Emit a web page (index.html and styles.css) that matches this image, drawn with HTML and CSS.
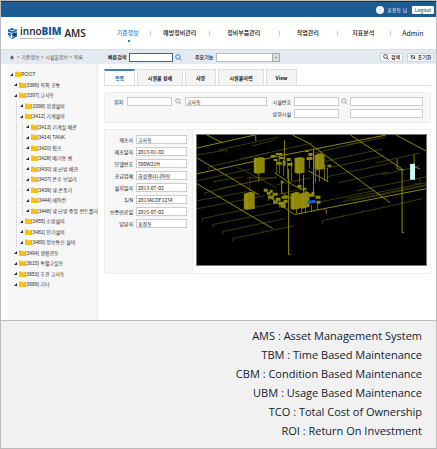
FILE: index.html
```html
<!DOCTYPE html>
<html lang="ko">
<head>
<meta charset="utf-8">
<title>innoBIM AMS</title>
<link rel="stylesheet" href="styles.css">
</head>
<body>
<svg class="defs" aria-hidden="true">
  <symbol id="search" viewBox="0 0 8 8"><circle cx="3.3" cy="3.3" r="2.5" fill="none" stroke="currentColor"/><path d="M5.2 5.2 7.5 7.5" stroke="currentColor"/></symbol>
  <symbol id="folder" viewBox="0 0 6 6"><path d="M0 .5h2.500l.7.8H6V6H0z" fill="#fdc010"/></symbol>
</svg>
<div class="app">
  <header>
    <div class="userbar">
      <svg class="avatar" viewBox="0 0 8 8"><circle cx="4" cy="4" r="4" fill="#f5f7f9"/><circle cx="4" cy="3.3" r="1.3" fill="#dde2e8"/><path d="M1.8 6.5q2.2-2.6 4.4 0" fill="#dde2e8"/></svg>
      <span>홍길동 님</span>
      <button class="logout">Logout</button>
    </div>
    <div class="navbar">
      <a class="logo" href="#">
        <svg viewBox="0 0 12 12"><path d="M1 2 5 0l6 2v7l-5 3-5-3z" fill="#16649f"/><path d="M0 4 5 6l6-2M5 6v5M1 8l4 2 5-3M3 2l3 1 3-1" fill="none" stroke="#fff"/><circle cx="8" cy="7" r="2" fill="#123e6e"/></svg>
        <span class="brand"><span>inno<b>BIM</b></span><small>BIM Building Information Modeling</small></span><span class="ams">AMS</span>
      </a>
      <nav>
        <a class="on" href="#">기준정보</a><a href="#">예방정비관리</a><a href="#">정비부품관리</a><a href="#">작업관리</a><a href="#">지표분석</a><a class="admin" href="#">Admin</a>
      </nav>
    </div>
    <div class="toolbar">
      <div class="crumbs"><svg viewBox="0 0 6 6"><path d="M3 0 6 3H5v3H3.600V4H2.400v2H1V3H0z" fill="#555"/></svg><span>&gt; 기준정보 &gt; 시설물정보 &gt; 목록</span></div>
      <label for="quick">빠른검색</label><input id="quick" class="quick"><svg class="lens blue"><use href="#search"/></svg>
      <label class="mainfn" for="fn">주요기능</label>
      <span class="selectbox"><select id="fn"><option></option></select><svg viewBox="0 0 8 8"><path d="m2 3 2 2 2-2" fill="none" stroke="#777"/></svg></span>
      <button class="act first"><svg><use href="#search"/></svg>검색</button>
      <button class="act"><svg viewBox="0 0 8 8"><path d="M3 7Q0 4 3 2M5 1q3 3 0 5M1 2h2v2M7 6H5V4" fill="none" stroke="#222"/></svg>초기화</button>
    </div>
  </header>
  <div class="body">
    <aside>
      <ul class="tree">
        <li><svg><use href="#folder"/></svg>ROOT</li>
        <li class="l1"><svg><use href="#folder"/></svg>[3389] 옥외 공통</li>
        <li class="l1"><svg><use href="#folder"/></svg>[3397] 교사동</li>
        <li class="l2"><svg><use href="#folder"/></svg>[3398] 위생설비</li>
        <li class="l2"><svg><use href="#folder"/></svg>[3412] 기계설비</li>
        <li class="l3"><svg><use href="#folder"/></svg>[3413] 기계실 배관</li>
        <li class="l3"><svg><use href="#folder"/></svg>[3414] TANK</li>
        <li class="l3"><svg><use href="#folder"/></svg>[3420] 펌프</li>
        <li class="l3"><svg><use href="#folder"/></svg>[3428] 배기용 팬</li>
        <li class="l3"><svg><use href="#folder"/></svg>[3430] 냉,난방 배관</li>
        <li class="l3"><svg><use href="#folder"/></svg>[3437] 온수 보일러</li>
        <li class="l3"><svg><use href="#folder"/></svg>[3439] 냉,온풍기</li>
        <li class="l3"><svg><use href="#folder"/></svg>[3444] 에어컨</li>
        <li class="l3"><svg><use href="#folder"/></svg>[3448] 냉,난방 중앙 컨트롤러</li>
        <li class="l2"><svg><use href="#folder"/></svg>[3455] 소방설비</li>
        <li class="l2"><svg><use href="#folder"/></svg>[3481] 전기설비</li>
        <li class="l2"><svg><use href="#folder"/></svg>[3489] 정보통신 설비</li>
        <li class="l1"><svg><use href="#folder"/></svg>[3494] 생활관동</li>
        <li class="l1"><svg><use href="#folder"/></svg>[3615] 특별교실동</li>
        <li class="l1"><svg><use href="#folder"/></svg>[3653] 후관 교사동</li>
        <li class="l1"><svg><use href="#folder"/></svg>[3689] 기타</li>
      </ul>
    </aside>
    <main>
      <div class="tabs"><button class="on">목록</button><button class="wide">시설물 상세</button><button>사양</button><button class="wide">시설물이력</button><button>View</button></div>
      <div class="filter">
        <label for="loc">위치</label><input id="loc"><svg class="lens"><use href="#search"/></svg><input aria-label="위치명" value="교사동">
        <label for="no">시설번호</label><input id="no"><svg class="lens"><use href="#search"/></svg><input aria-label="시설명">
        <label class="upper" for="up">상위시설</label><input id="up"><input class="last" aria-label="상위시설명">
      </div>
      <div class="detail">
        <div class="form">
          <label for="a">제조사</label><input id="a" value="교사동">
          <label for="b">제조일자</label><input id="b" value="2013-01-02">
          <label for="c">모델번호</label><input id="c" value="500W21H">
          <label for="d">공급업체</label><input id="d" value="화성엔지니어링">
          <label for="e">설치일자</label><input id="e" value="2013-07-02">
          <label for="f">S/N</label><input id="f" value="2013ACDF1234">
          <label for="g">보증만료일</label><input id="g" value="2015-07-02">
          <label for="h">담당자</label><input id="h" value="홍길동">
        </div>
        <div class="view">
          <svg viewBox="0 0 230 131">
            <rect width="230" height="131" fill="#000"/>
            <g fill="none" stroke="#4c4a08" stroke-width=".8">
              <path d="M0 20 30 15M22 15l60-13M12 32l60-14M44 24l72-16M0 46l54-12M16 47l30-5M8 58l60-14M22 54l58-12M0 66l50-9M0 74l68-13M5 84l70-15M16 90l68-14M26 97l62-13M36 104l62-13M55 11l24-6M40 32l40 21"/>
              <path d="M110 20l60-14M126 27l60-13M118 36l70-15M130 42l66-14M142 48l50-11M180 28l44-10M120 68l58-12M126 86l60-13 40-9M150 10l40-8M160 56l70-14M150 64l80-16M156 66l74-15M146 67l84-17M80 50l34-7M70 62l38-8M186 40l38-9"/>
              <path d="M30 15v3M12 32v3M8 58v3M5 84v3M16 90v3M26 97v3M36 104v3M66 95v3M126 86v3M146 80v3M166 75v3M53 42v26M50 43h30M224 43v6h-6"/>
            </g>
            <g fill="none" stroke="#8d880a">
              <path d="M0 13 58 0M0 39 78 22 190 0M0 23 62 60M0 49 76 94M10 0l16 8M59 0v6M88 5v22M92 34v86h2M96 0l16 8 82 60M98 80l14-3 118-23M154 0l52 34v64h2M200 0l30 16M201 24v10l7 1M218 20v12l6 2M78 38l18 12 16 8M72 62l26 18M117 14v46M107 40v20M85 46v12l10 6M112 36l20 11"/>
              <path d="M80 24v14m3-17v18m4-14v16m4-14v17m4-18v20M62 38v9M103 38v10M113 22v12M119 34v14M123 34v13M128 32v14M131 33v14M100 73v6M105 73v6M109 72v6M115 70v7M121 68v7M72 66v-6M77 70v-8M83 73v-7" stroke-width=".8"/>
            </g>
            <g fill="#8f8908">
              <path d="M57 23l8-1 3 1v15l-8 1-3-1zM47 59l7-2 4 1v16l-8 1-3-1zM98 23l6-1 4 1v15l-7 1-3-1zM118 20l6-2 4 2v14l-7 1-3-1zM94 59l6-2 3 1v16l-7 1-2-1zM103 59l7-2 3 1v14l-7 2-3-1z"/>
              <path d="M74 20h5v2h-5zM77 24h4v2h-4zM79 18h7v2h-7zM82 22h6v2h-6zM80 27h5v3h-5zM86 26h3v5h-3zM90 23h4v3h-4zM91 28h5v3h-5zM109 15h3v2h-3zM112 18h4v3h-4zM110 22h6v3h-6zM131 30h4v2h-4zM126 30h3v2h-3z"/>
              <path d="M67 54h4v3h-4zM70 57h4v3h-4zM73 55h3v3h-3zM76 58h5v3h-5zM72 61h5v3h-5zM79 63h5v3h-5zM85 61h6v3h-6zM82 67h7v3h-7zM77 66h4v3h-4zM87 65h4v3h-4zM84 70h5v3h-5zM101 50h4v3h-4zM106 53h4v2h-4zM112 59h4v3h-4zM115 57h3v5h-3zM119 61h5v3h-5zM120 66h4v3h-4zM84 46h3v2h-3z"/>
            </g>
            <path d="M59 23v15M101 24v14M121 20v14M50 59v15M97 59v15M106 59v13" stroke="#b5ae20" stroke-width=".5"/>
            <path d="m111 66 8-1v3l-8 1z" fill="#1b5cdc"/>
            <path d="M214 29h5v16h-5z" fill="#c5faf1"/>
            <path d="m128 75 2 1v3" stroke="#777" fill="none"/>
          </svg>
        </div>
      </div>
    </main>
  </div>
  <footer>
    <p>AMS : Asset Management System</p><p>TBM : Time Based Maintenance</p><p>CBM : Condition Based Maintenance</p><p>UBM : Usage Based Maintenance</p><p>TCO : Total Cost of Ownership</p><p>ROI : Return On Investment</p>
  </footer>
</div>
</body>
</html>
```
FILE: styles.css
```css
* { box-sizing: border-box; }
body { margin: 0; font: 5px/8px "Noto Sans CJK KR", sans-serif; color: #111; background: #fff; }
button, input, select { font: inherit; color: inherit; margin: 0; padding: 0; border-radius: 0; min-width: 0; }
a { color: inherit; text-decoration: none; }
svg { display: block; flex: none; }
.defs { position: absolute; width: 0; height: 0; }
.app { border: 1px solid #bbb; min-height: 100vh; display: flex; flex-direction: column; }

.userbar { height: 16px; background: #1d5b93; border-top: 1px solid #1c3440; display: flex; align-items: center; justify-content: flex-end; gap: 3px; padding-right: 2px; color: #f2f6fa; }
.avatar { width: 8px; height: 8px; }
.logout { width: 22px; height: 8px; border: 0; border-radius: 1px; background: #fff; color: #333; line-height: 8px; margin-left: 2px; }

.navbar { height: 32px; display: flex; align-items: center; }
.logo { display: flex; align-items: center; width: 104px; padding-left: 6px; color: #222; font: 10px/12px "Open Sans", sans-serif; }
.logo svg { width: 11px; height: 11px; margin-right: 2px; }
.brand { display: flex; flex-direction: column; font-weight: 600; }
.brand b { color: #16589a; }
.brand small { font-size: 2px; line-height: 4px; color: #555; }
.ams { font-weight: 600; margin-left: 3px; }
nav { flex: 1; display: flex; font-size: 6px; font-weight: 500; line-height: 12px; }
nav a { flex: 58 1 0; text-align: center; position: relative; }
nav a:nth-child(1) { flex-grow: 45; }
nav a:nth-child(3) { flex-grow: 69; }
nav a:nth-child(5) { flex-grow: 52; }
nav a:nth-child(6) { flex-grow: 46; }
nav a + a::before { content: ""; position: absolute; left: 0; top: 4px; height: 5px; border-left: 1px solid #ccc; }
nav .on { color: #1689dc; }
nav .on::after { content: ""; position: absolute; left: 50%; top: 13px; width: 2px; height: 2px; background: #1689dc; }
nav .admin { font-size: 7px; font-weight: 400; }

.toolbar { height: 15px; background: #e3eaf2; border-top: 1px solid #d8dee6; display: flex; align-items: center; padding: 0 2px 0 9px; }
.crumbs { flex: none; width: 98px; display: flex; align-items: center; gap: 3px; color: #555; }
.crumbs svg { width: 4px; height: 5px; }
.toolbar label { width: 21px; font-weight: 500; white-space: nowrap; }
.quick { width: 44px; height: 9px; border: 1px solid #2b6ca3; background: #fff; }
.lens { width: 7px; height: 7px; color: #999; margin: 0 auto; }
.toolbar .lens { margin: 0 0 0 2px; }
.toolbar .blue { color: #2274b4; }
.toolbar .mainfn { margin-left: 13px; }
.selectbox { position: relative; width: 64px; }
.selectbox select { display: block; width: 100%; height: 9px; appearance: none; border: 1px solid #bbb; background: #fff; }
.selectbox svg { position: absolute; right: 0; top: 0; width: 8px; height: 9px; background: #ddd; border: 1px solid #aaa; }
.act { display: flex; align-items: center; justify-content: center; gap: 2px; width: 27px; height: 9px; border: 1px solid #d0d5da; background: #fff; margin-left: 4px; font-weight: 500; white-space: nowrap; }
.act.first { width: 23px; margin-left: auto; }
.act svg { width: 6px; height: 6px; }

.body { display: flex; height: 256px; }
aside { width: 91px; margin-left: 6px; background: #f7f7f7; border-right: 1px solid #e8e8e8; padding: 5px 0 31px; }
.tree { list-style: none; margin: 0; padding: 0; height: 100%; display: flex; flex-direction: column; justify-content: space-between; }
.tree li { display: flex; align-items: center; height: 10px; padding-left: 3px; color: #333; font-family: "Liberation Sans", "Noto Sans CJK KR", sans-serif; white-space: nowrap; }
.tree li::before { content: ""; border-left: 3px solid transparent; border-bottom: 3px solid #222; margin-right: 2px; }
.tree svg { width: 6px; height: 6px; }
.tree .l1 { padding-left: 7px; }
.tree .l2 { padding-left: 13px; background: linear-gradient(#ddd, #ddd) 9px 0 / 1px 100% no-repeat; }
.tree .l3 { padding-left: 19px; background: linear-gradient(#ddd, #ddd) 9px 0 / 1px 100% no-repeat, linear-gradient(#ddd, #ddd) 15px 0 / 1px 100% no-repeat; }

main { flex: 1; min-width: 0; padding: 5px 5px 0 6px; }
.tabs { display: flex; gap: 2px; border-bottom: 1px solid #ddd; }
.tabs button { width: 31px; height: 16px; border: 1px solid #ddd; border-bottom: 0; background: #f4f4f4; font-weight: 700; }
.tabs .wide { width: 46px; }
.tabs .on { background: #fff; border-top: 2px solid #4580b2; color: #1d6aa8; }
.filter { margin-top: 6px; height: 31px; padding: 4px 7px 0 9px; background: #f7f7f7; border: 1px solid #eee; border-radius: 2px; display: grid; grid-template-columns: 13px 45px 13px 82px 27px 45px 11px 1fr; grid-auto-rows: 9px; row-gap: 3px; align-items: center; }
.filter label:not([for=loc]) { text-align: right; padding-right: 3px; white-space: nowrap; }
.filter input, .form input { width: 100%; height: 9px; border: 1px solid #ccc; background: #fff; padding: 0 1px; line-height: 7px; }
.filter .upper { grid-column: 5; }
.filter .last { grid-column: 8; }
.detail { margin-top: 6px; display: flex; }
.form { flex: none; width: 89px; height: 145px; padding: 5px 5px 0 3px; background: #f7f7f7; border: 1px solid #eee; display: grid; grid-template-columns: 25px 1fr; grid-auto-rows: 9px; gap: 3px; align-content: start; align-items: center; }
.form label { text-align: right; white-space: nowrap; }
.view { flex: 1; min-width: 0; border: 1px solid #f1f1f1; border-left: 0; padding: 4px 3px 0; }
.view svg { width: 100%; border: 1px solid #777; }

footer { flex: 1; border-top: 1px solid #bbb; background: #f1f1f1; padding: 5px 14px 8px; text-align: right; color: #111c30; font: 11px/19px "Open Sans", sans-serif; }
footer p { margin: 0; }
```
